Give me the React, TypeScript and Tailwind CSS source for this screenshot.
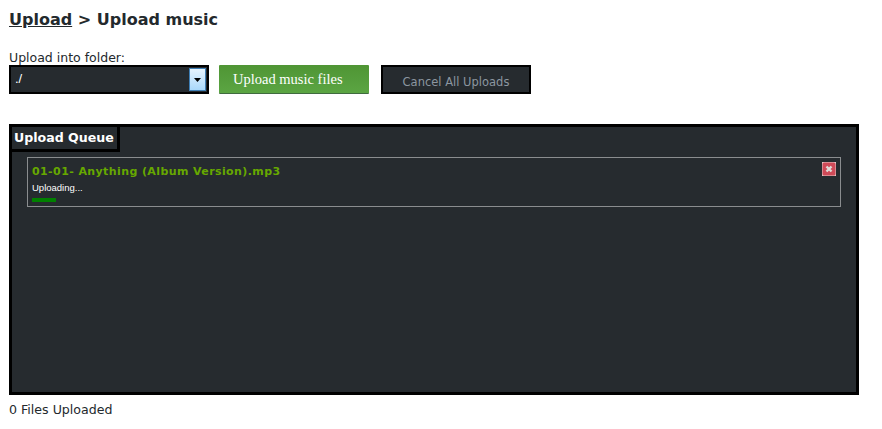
export default function App() {
  return (
    <div className="h-[429px] w-[882px] overflow-hidden bg-white pl-[9px] pt-[9px] font-['DejaVu_Sans',sans-serif] text-[#23292d]">
      <h1 className="h-[21px] text-[16px] font-bold leading-[21px]">
        <a className="underline">Upload</a> &gt; Upload music
      </h1>

      <div className="mt-[20px] h-[15px] text-[12.5px] leading-[15px]">Upload into folder:</div>

      <div className="flex h-[29px] items-start">
        <div className="flex h-[29px] w-[200px] items-stretch border-2 border-black bg-[#262b2f] p-[1px]">
          <span className="flex-1 pl-[3px] font-['Liberation_Sans',sans-serif] text-[13px] leading-[22px] text-white">./</span>
          <span className="flex w-[17px] items-center justify-center border border-[#3f7fb5] bg-gradient-to-b from-[#e6f3fd] to-[#a9d8fa]">
            <svg width="7" height="4" viewBox="0 0 7 4"><path d="M0 0h7L3.5 4z" fill="#000" /></svg>
          </span>
        </div>
        <button className="ml-[10px] h-[29px] w-[150px] rounded-[1px] border-b border-[#3f6b3f] bg-gradient-to-b from-[#4f9534] to-[#5ba543] pb-[1px] pl-[14px] text-left font-['Liberation_Serif',serif] text-[14.5px] leading-[28px] text-white">
          Upload music files
        </button>
        <button className="ml-[12px] h-[29px] w-[150px] border-2 border-black bg-[#262b2f] pt-[4px] text-center text-[11.5px] leading-[23px] text-[#8c96a0]">
          Cancel All Uploads
        </button>
      </div>

      <section className="mt-[30px] h-[271px] w-[850px] border-[3px] border-black bg-[#262b2f]">
        <div className="h-[25px] w-[108px] whitespace-nowrap border-b-[3px] border-r-[3px] border-black pl-[2px] text-[12.6px] font-bold leading-[22px] text-white">
          Upload Queue
        </div>
        <div className="ml-[15px] mt-[5px] flex h-[50px] w-[814px] justify-between border border-[#8a8d8f] pl-[4px] pr-[4px] pt-[4px]">
          <div>
            <div className="h-[15px] overflow-hidden whitespace-nowrap text-[11px] font-bold leading-[19px] tracking-[0.4px] text-[#66a800]">
              01-01- Anything (Album Version).mp3
            </div>
            <div className="mt-[5px] font-['Liberation_Sans',sans-serif] text-[9.5px] leading-[12px] text-white">Uploading...</div>
            <div className="mt-[4px] h-[4px] w-[24px] bg-[#008000]" />
          </div>
          <svg width="14" height="14" viewBox="0 0 14 14">
            <rect width="14" height="14" fill="#e6c8c8" />
            <rect x="0.5" y="0.5" width="13" height="13" rx="1.5" fill="#cf4a58" />
            <path d="M4.5 4.5l5 5M9.5 4.5l-5 5" stroke="#e0dcd8" strokeWidth="2.4" />
          </svg>
        </div>
      </section>

      <div className="mt-[7px] text-[12.6px] leading-[15px]">0 Files Uploaded</div>
    </div>
  );
}
